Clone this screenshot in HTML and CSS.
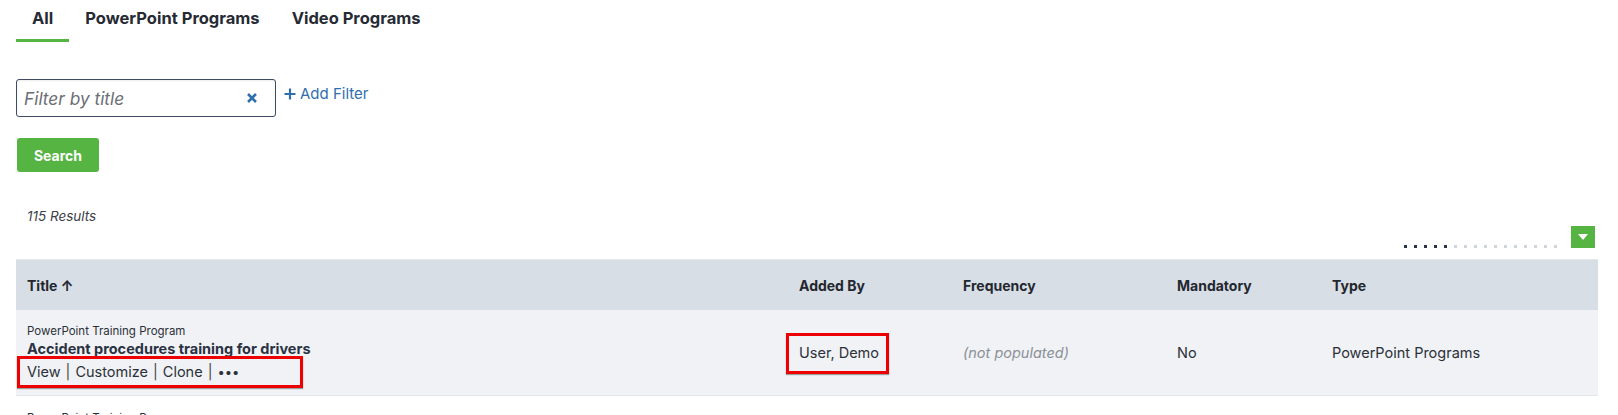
FILE: index.html
```html
<!DOCTYPE html>
<html>
<head>
<meta charset="utf-8">
<link rel="stylesheet" href="styles.css">
</head>
<body>
<div class="page">
  <nav class="tabs">
    <a class="tab active">All</a>
    <a class="tab">PowerPoint Programs</a>
    <a class="tab">Video Programs</a>
  </nav>

  <div class="filter-row">
    <div class="filter-input">
      <span class="placeholder">Filter by title</span>
      <svg class="clear" width="12" height="12" viewBox="0 0 12 12"><path d="M2 2 L10 10 M10 2 L2 10" stroke="#2f6fad" stroke-width="2.6" stroke-linecap="butt"/></svg>
    </div>
    <a class="add-filter"><svg width="12" height="12" viewBox="0 0 12 12"><path d="M6 0.5 V11.5 M0.5 6 H11.5" stroke="#2f6fad" stroke-width="2.2"/></svg>Add Filter</a>
  </div>

  <button class="search-btn">Search</button>

  <div class="results">115 Results</div>

  <div class="toolbar">
    <div class="dots">
      <span class="dot on"></span><span class="dot on"></span><span class="dot on"></span><span class="dot on"></span><span class="dot on"></span>
      <span class="dot"></span><span class="dot"></span><span class="dot"></span><span class="dot"></span><span class="dot"></span><span class="dot"></span><span class="dot"></span><span class="dot"></span><span class="dot"></span><span class="dot"></span><span class="dot"></span>
    </div>
    <div class="menu-btn"><svg width="10" height="6" viewBox="0 0 10 6"><path d="M0 0 H10 L5 6 Z" fill="#fff"/></svg></div>
  </div>

  <div class="table">
    <div class="row head">
      <div class="cell">Title ↑</div>
      <div class="cell">Added By</div>
      <div class="cell">Frequency</div>
      <div class="cell">Mandatory</div>
      <div class="cell">Type</div>
    </div>
    <div class="row odd">
      <div class="cell title-cell">
        <div class="subtype">PowerPoint Training Program</div>
        <div class="title">Accident procedures training for drivers</div>
        <div class="links highlight">View<span class="sep">|</span>Customize<span class="sep">|</span>Clone<span class="sep">|</span><span class="more">•••</span></div>
      </div>
      <div class="cell"><span class="highlight user">User, Demo</span></div>
      <div class="cell muted">(not populated)</div>
      <div class="cell">No</div>
      <div class="cell">PowerPoint Programs</div>
    </div>
    <div class="row even">
      <div class="cell title-cell">
        <div class="subtype">PowerPoint Training Program</div>
      </div>
    </div>
  </div>
</div>
</body>
</html>
```

FILE: styles.css
```css
*, *::before, *::after { box-sizing: border-box; }
html, body { margin: 0; padding: 0; background: #fff; }
body {
  font-family: "Inter", "DejaVu Sans", sans-serif;
  color: #2a2f3a;
  overflow: hidden;
}
.page { padding: 0 20px 0 16px; height: 415px; overflow: hidden; }

.tabs { display: flex; height: 42px; }
.tab {
  padding: 8px 16px 0;
  font-size: 16.5px;
  font-weight: 700;
  color: #262a33;
  border-bottom: 3px solid transparent;
}
.tab.active { border-bottom-color: #56b443; }

.filter-row { display: flex; align-items: flex-start; margin-top: 37px; }
.filter-input {
  width: 260px;
  height: 38px;
  border: 1px solid #3e4a66;
  border-radius: 3px;
  display: flex;
  align-items: center;
  justify-content: space-between;
  padding: 0 17px 0 7px;
  box-shadow: inset 0 1px 2px rgba(0,0,0,0.08);
}
.placeholder { font-size: 17.3px; font-style: italic; color: #6a6e75; }
.add-filter {
  display: flex; align-items: center; gap: 4px;
  margin: 5px 0 0 8px;
  font-size: 15px;
  color: #2f6fad;
}
.search-btn {
  display: block;
  margin-top: 21px;
  margin-left: 1px;
  width: 82px; height: 34px;
  border: none; border-radius: 3px;
  background: #56b443;
  color: #fff;
  font-family: inherit;
  font-size: 14px; font-weight: 700;
}
.results {
  margin: 36px 0 0 11px;
  font-size: 13.5px;
  font-style: italic;
  color: #3c4048;
  line-height: 16px;
}
.toolbar {
  display: flex; justify-content: flex-end; align-items: flex-start;
  gap: 14px;
  padding: 2px 3px 0 0;
  height: 35px;
}
.dots { display: flex; gap: 7px; margin-top: 19px; }
.dot { width: 3px; height: 3px; background: #d0d5dc; }
.dot.on { background: #2a3246; }
.menu-btn {
  width: 24px; height: 22px;
  background: #56b443;
  display: flex; align-items: center; justify-content: center;
}

.row {
  display: grid;
  grid-template-columns: 772px 164px 214px 155px 1fr;
  align-items: center;
}
.row .cell { padding-left: 11px; font-size: 14.5px; }
.head { background: #d8dee6; height: 51px; border-top: 1px solid #e4e8ed; }
.head .cell { font-weight: 700; font-size: 14px; color: #23272f; }
.odd { background: #f0f2f5; height: 86px; border-bottom: 1px solid #e4e7ec; }
.odd .cell { color: #2c3039; }
.even { background: #fff; height: 40px; align-items: start; }
.title-cell { padding-bottom: 1px; }
.even .title-cell { padding-top: 14px; }
.subtype { font-size: 11.5px; color: #2c3039; line-height: 16px; }
.title { font-size: 14.5px; font-weight: 700; color: #2b3244; line-height: 20px; }
.links {
  display: inline-block;
  position: relative;
  margin-top: 3px;
  font-size: 14.5px;
  color: #2c3039;
  line-height: 20px;
}
.sep { color: #444; margin: 0 5px; }
.more { font-size: 13px; }
.muted { font-style: italic; color: #8c9097 !important; }
.user { display: inline-block; position: relative; line-height: 18px; }
.highlight::after {
  content: "";
  position: absolute;
  border: 3.5px solid #ee0000;
  box-shadow: 0 1px 1px rgba(0,0,0,0.35);
}
.links.highlight::after { left: -10px; top: -6px; width: 286px; height: 32px; }
.user.highlight::after { left: -13px; top: -11px; width: 103px; height: 41px; }
```
